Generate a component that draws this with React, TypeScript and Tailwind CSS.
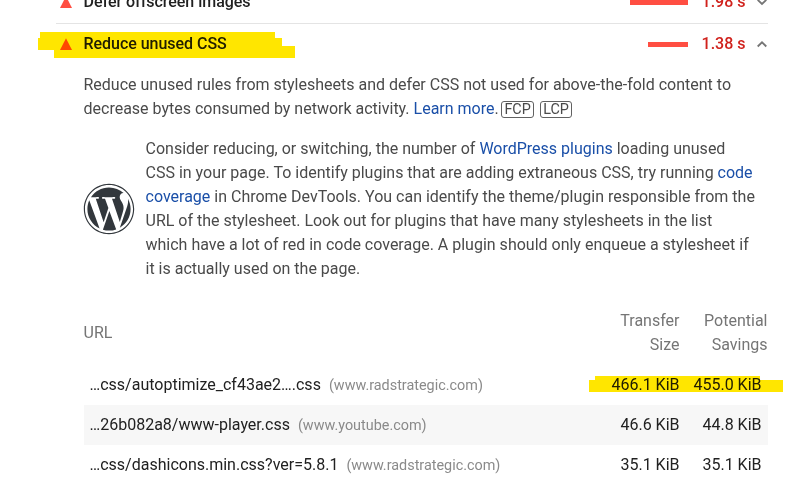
import React from "react";
import { FaWordpress } from "react-icons/fa";

const Link = ({ children }: { children: React.ReactNode }) => (
  <a className="text-[#1a4fa8]">{children}</a>
);

const Triangle = () => (
  <svg width="12" height="12" viewBox="0 0 12 12" className="shrink-0">
    <path d="M6 0.3 L12 12 H0 Z" fill="#ff4e42" />
  </svg>
);

function AuditHeader({ title, time, bar, open }: { title: string; time: string; bar: string; open?: boolean }) {
  return (
    <div className="flex h-10 items-center pl-1 text-[#212121]">
      <Triangle />
      <span className="ml-[11.5px] grow font-medium tracking-[-0.03px]">{title}</span>
      <span className={`h-[5px] bg-[#ff4e42] ${bar}`} />
      <span className="w-[57.5px] text-right font-medium text-[#d0211c]">{time}</span>
      <svg width="12" height="8" viewBox="0 0 12 8" className="ml-[10.5px] shrink-0" fill="none" stroke="#757575" strokeWidth="1.8">
        <path d={open ? "M1.7 6.5 L6 2.3 L10.3 6.5" : "M1.7 1.8 L6 6 L10.3 1.8"} />
      </svg>
    </div>
  );
}

const Metric = ({ children }: { children: string }) => (
  <span className="flex h-[17px] items-center rounded-[3px] border border-[#616161] px-[2.2px] pt-[2px] text-[14.4px] leading-none">
    {children}
  </span>
);

const rows = [
  { url: "…css/autoptimize_cf43ae2….css", host: "(www.radstrategic.com)", size: "466.1 KiB", savings: "455.0 KiB" },
  { url: "…26b082a8/www-player.css", host: "(www.youtube.com)", size: "46.6 KiB", savings: "44.8 KiB" },
  { url: "…css/dashicons.min.css?ver=5.8.1", host: "(www.radstrategic.com)", size: "35.1 KiB", savings: "35.1 KiB" },
];

export default function App() {
  return (
    <div className="relative h-[483px] w-[793px] overflow-hidden bg-white pl-14 pr-[25px] font-['Roboto',sans-serif] text-base leading-6 text-[#4a4a4a]">
      <div className="-mt-[18px] border-b border-[#e4e4e4] pb-px">
        <AuditHeader title="Defer offscreen images" time="1.98 s" bar="w-[58px]" />
      </div>
      <AuditHeader title="Reduce unused CSS" time="1.38 s" bar="w-10" open />

      <div className="pl-[27.5px]">
        <div className="mt-[9px] whitespace-nowrap">
          <p>Reduce unused rules from stylesheets and defer CSS not used for above-the-fold content to</p>
          <div className="flex items-center">
            <p>
              decrease bytes consumed by network activity. <Link>Learn more</Link>.
            </p>
            <div className="ml-[2.5px] mt-px flex gap-1.5">
              <Metric>FCP</Metric>
              <Metric>LCP</Metric>
            </div>
          </div>
        </div>

        <div className="mt-4 flex items-center whitespace-nowrap">
          <FaWordpress size={52} color="#32373c" className="-ml-px shrink-0" />
          <p className="ml-[11px]">
            Consider reducing, or switching, the number of <Link>WordPress plugins</Link> loading unused
            <br />
            CSS in your page. To identify plugins that are adding extraneous CSS, try running <Link>code</Link>
            <br />
            <Link>coverage</Link> in Chrome DevTools. You can identify the theme/plugin responsible from the
            <br />
            URL of the stylesheet. Look out for plugins that have many stylesheets in the list
            <br />
            which have a lot of red in code coverage. A plugin should only enqueue a stylesheet if
            <br />
            it is actually used on the page.
          </p>
        </div>

        <div className="mt-7 flex items-center pr-[0.5px] text-[#757575]">
          <span className="grow">URL</span>
          <span className="text-right">Transfer<br />Size</span>
          <span className="w-[88px] text-right">Potential<br />Savings</span>
        </div>

        <div className="mt-2">
          {rows.map((r) => (
            <div key={r.url} className="flex h-10 items-center whitespace-nowrap pl-1.5 pr-[6.5px] text-[#212121] even:bg-[#f7f7f7]">
              <span>{r.url}</span>
              <span className="ml-2 mt-px grow text-[14.4px] text-[#8a8a8a]">{r.host}</span>
              <span>{r.size}</span>
              <span className="w-[82px] text-right">{r.savings}</span>
            </div>
          ))}
        </div>
      </div>

      {/* Highlighter strokes drawn over the report */}
      <svg className="pointer-events-none absolute inset-0 mix-blend-multiply" width="793" height="483" fill="#ffe600" shapeRendering="crispEdges">
        <path d="M40 32H275V38H282V46H295V58H54V50H38V38H40Z" />
        <path d="M595 376H760V380H783V392H589V380H595Z" />
      </svg>
    </div>
  );
}
